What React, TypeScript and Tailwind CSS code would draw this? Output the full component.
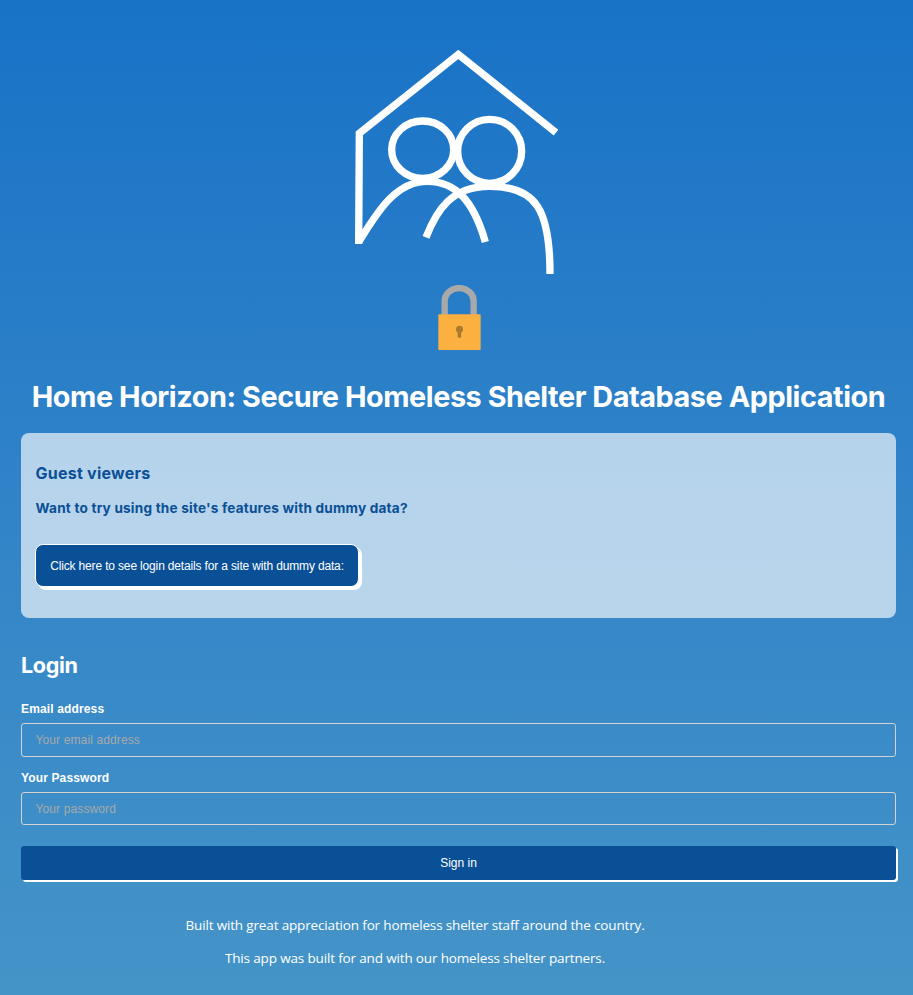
function Logo() {
  return (
    <svg className="block h-[240px] w-[240px]" viewBox="0 0 720 720" fill="none" stroke="white" strokeWidth="22">
      <path d="M648 278 L355 43 L58 280 L56 612" />
      <ellipse cx="248" cy="329" rx="93" ry="86" />
      <ellipse cx="449" cy="334" rx="96" ry="96" />
      <path d="M56 606 C110 520 165 424 262 424 C345 424 400 480 436 606" />
      <path d="M258 592 C290 510 335 439 448 439 C590 439 630 510 630 702" />
    </svg>
  );
}

function Padlock() {
  return (
    <svg className="block h-[66px] w-[44px]" viewBox="0 0 132 198">
      <path d="M23 92 V48 A43.5 39 0 0 1 110 48 V92" fill="none" stroke="#a9a9a9" strokeWidth="19" />
      <rect x="4" y="88" width="127" height="107" rx="2" fill="#fcb040" />
      <circle cx="67.5" cy="133" r="10.5" fill="#a87b2e" />
      <rect x="62" y="133" width="10.5" height="25" fill="#a87b2e" />
    </svg>
  );
}

function Field({ id, label, type, placeholder, boxClass }: { id: string; label: string; type: string; placeholder: string; boxClass: string }) {
  return (
    <div>
      <label htmlFor={id} className="block h-4 text-[12px] leading-4 font-bold tracking-[0.14px]">
        {label}
      </label>
      <input
        id={id}
        type={type}
        placeholder={placeholder}
        className={`block w-full rounded-[3px] border border-[#d3d3d3] bg-transparent px-[13.5px] text-[12px] tracking-[0.12px] outline-none placeholder:text-[#a9a9a9] ${boxClass}`}
      />
    </div>
  );
}

export default function App() {
  return (
    <main className="flex h-[995px] w-full flex-col overflow-hidden bg-linear-to-b from-[#1872c7] to-[#4594c8] pr-[17px] pl-[21px] font-['Liberation_Sans',Arial,sans-serif] text-white">
      <header className="flex h-[433px] flex-col items-center pt-10">
        <div className="ml-[3px]">
          <Logo />
        </div>
        <div className="mt-[5px] ml-px">
          <Padlock />
        </div>
        <h1 className="mt-[26px] font-['Inter',sans-serif] text-[28.8px] leading-10 font-bold tracking-[-0.43px] whitespace-nowrap">
          Home Horizon: Secure Homeless Shelter Database Application
        </h1>
      </header>

      <section className="h-[185px] shrink-0 rounded-lg bg-white/65 px-[14px] pt-[28px] text-[#0a5096]">
        <div className="pl-[0.6px] font-['Inter',sans-serif] font-bold">
          <h2 className="text-[16px] leading-6 tracking-[0.23px]">Guest viewers</h2>
          <p className="mt-3 text-[13.6px] leading-[22px] tracking-[0.2px]">
            Want to try using the site's features with dummy data?
          </p>
        </div>
        <button className="mt-[25px] flex h-[43px] w-[324px] items-center justify-center rounded-lg border border-white bg-[#0a5096] text-[12px] tracking-[-0.155px] whitespace-nowrap text-white shadow-[3px_3px_0_white]">
          Click here to see login details for a site with dummy data:
        </button>
      </section>

      <form className="mt-[31px]">
        <h2 className="font-['Inter',sans-serif] text-[21.6px] leading-8 font-bold tracking-[-0.35px]">Login</h2>
        <div className="mt-[20px]">
          <Field id="email" label="Email address" type="email" placeholder="Your email address" boxClass="mt-[6px] h-[34px]" />
        </div>
        <div className="mt-[13px]">
          <Field id="password" label="Your Password" type="password" placeholder="Your password" boxClass="mt-[6px] h-[33px]" />
        </div>
        <button className="mt-[21px] flex h-[34px] w-full items-center justify-center rounded-[3px] bg-[#0a5096] text-[12px] shadow-[2px_2px_0_white]">
          Sign in
        </button>
      </form>

      <footer className="mt-[34px] w-[788px] text-center font-['Open_Sans',sans-serif] text-[13.5px] leading-[22px] tracking-[-0.155px]">
        <p>Built with great appreciation for homeless shelter staff around the country.</p>
        <p className="mt-[11px]">This app was built for and with our homeless shelter partners.</p>
      </footer>
    </main>
  );
}
